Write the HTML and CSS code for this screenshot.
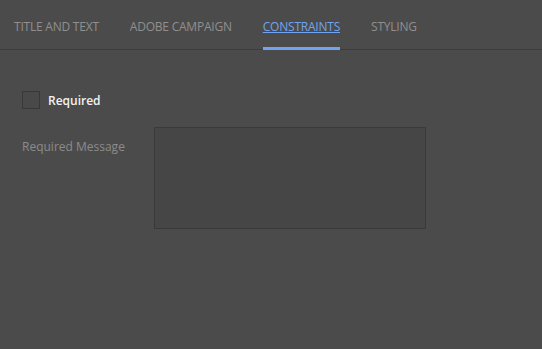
FILE: index.html
```html
<!DOCTYPE html>
<html lang="en">
<head>
    <meta charset="UTF-8">
    <title>Constraints</title>
    <link rel="stylesheet" href="styles.css">
</head>
<body>
    <nav class="tabs">
        <a class="tab">TITLE AND TEXT</a>
        <a class="tab">ADOBE CAMPAIGN</a>
        <a class="tab active">CONSTRAINTS</a>
        <a class="tab">STYLING</a>
    </nav>

    <section class="panel">
        <label class="check">
            <span class="box"></span>
            <span class="check-label">Required</span>
        </label>

        <div class="field">
            <label class="field-label" for="msg">Required Message</label>
            <textarea id="msg" class="field-input"></textarea>
        </div>
    </section>
</body>
</html>
```

FILE: styles.css
```css
body {
    margin: 0;
    background-color: #4b4b4b;
    font-family: "Open Sans", Arial, sans-serif;
}

.tabs {
    display: flex;
    gap: 31px;
    padding-left: 14px;
    height: 49px;
    border-bottom: 1px solid #3d3d3d;
}

.tab {
    font-size: 12px;
    color: #8f8f8f;
    padding-top: 18px;
    box-sizing: border-box;
    height: 50px;
    letter-spacing: -0.22px;
}

.tab.active {
    color: #72a3f0;
    text-decoration: underline;
    border-bottom: 3px solid #72a3f0;
}

.panel {
    padding: 41px 22px;
}

.check {
    display: flex;
    align-items: center;
    gap: 8px;
}

.box {
    width: 16px;
    height: 16px;
    border: 1px solid #383838;
    background-color: #494949;
}

.check-label {
    font-size: 12px;
    font-weight: 600;
    color: #f2f2f2;
}

.field {
    display: flex;
    margin-top: 18px;
}

.field-label {
    width: 132px;
    font-size: 12px;
    color: #8c8c8c;
    padding-top: 11px;
}

.field-input {
    width: 270px;
    height: 100px;
    margin: 0;
    padding: 0;
    border: 1px solid #3a3a3a;
    background-color: #464646;
    resize: none;
}
```
